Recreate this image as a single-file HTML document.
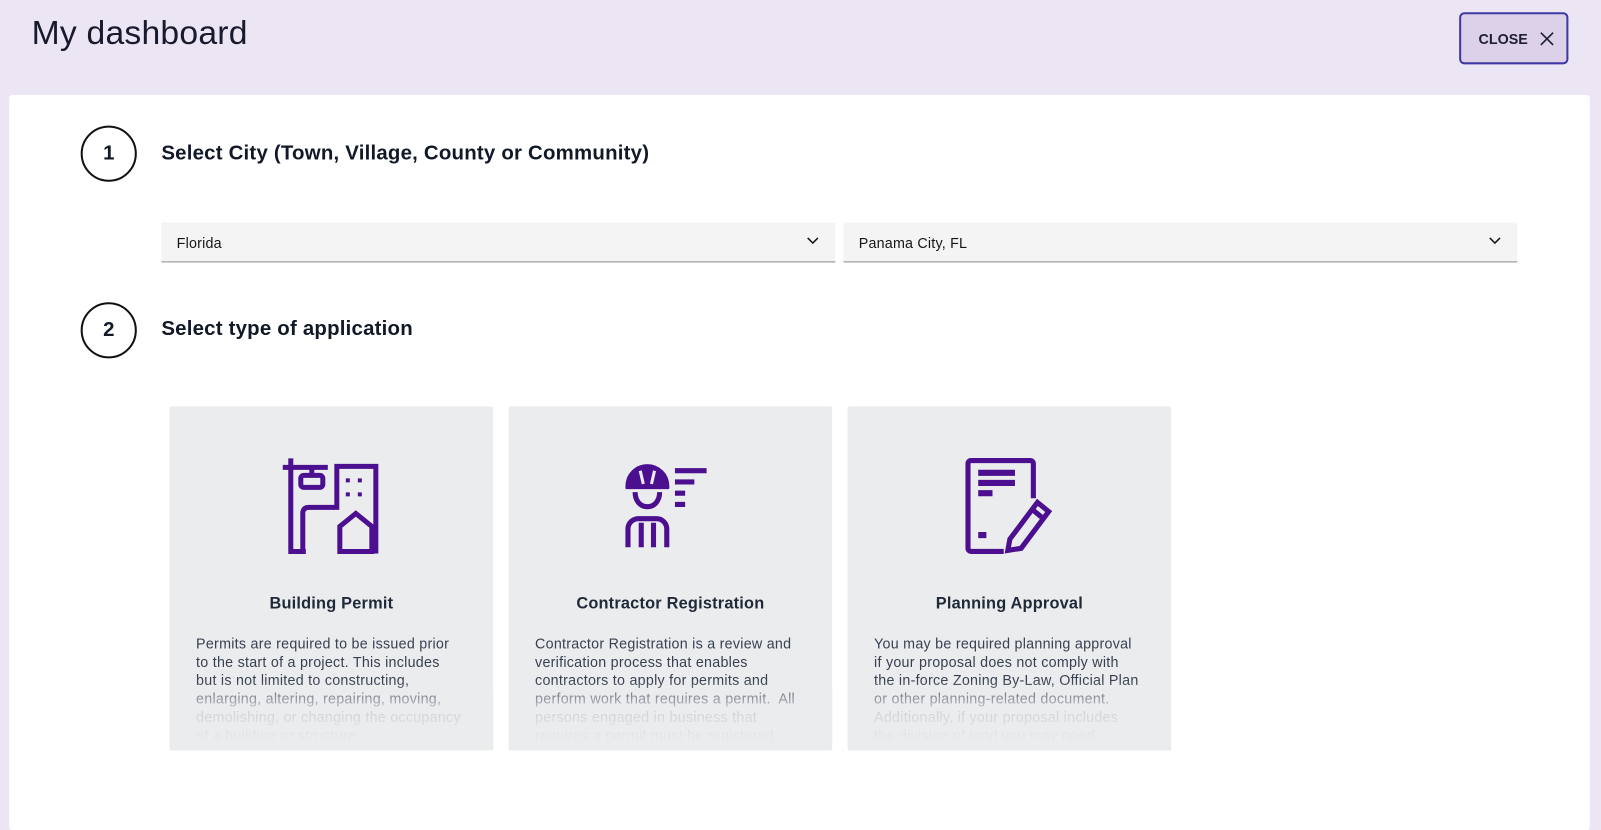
<!DOCTYPE html>
<html><head><style>
*{margin:0;padding:0;box-sizing:border-box}
body{width:1601px;height:798px;background:#ece6f4;font-family:"Liberation Sans",sans-serif;overflow:hidden;color:#111827}
#w{position:absolute;left:0;top:0;width:1568px;height:782px;transform:scale(1.0211);transform-origin:0 0}
h1{position:absolute;left:31px;top:13px;font-size:33px;font-weight:400;color:#1a1a2e;letter-spacing:.2px}
.close{position:absolute;left:1429px;top:12px;width:107px;height:51px;border:2px solid #3f3aa3;border-radius:5px;background:#ddd1ea;font-size:14px;font-weight:700;color:#1f1f33;display:flex;align-items:center;padding-left:17px}
.close svg{margin-left:12px}
.panel{position:absolute;left:9px;top:93px;width:1548px;height:720px;background:#fff;border-radius:3px}
.num{position:absolute;width:55px;height:55px;border:2px solid #111;border-radius:50%;font-size:20px;font-weight:700;display:flex;align-items:center;justify-content:center}
.st{position:absolute;font-size:20px;font-weight:700;color:#111827;letter-spacing:.2px}
.sel{position:absolute;top:218px;height:39px;background:#f4f4f4;border-bottom:1px solid #8d8d8d;font-size:14px;padding:12px 15px;color:#161616;letter-spacing:.2px}
.sel svg{position:absolute;right:16px;top:14px}
.card{position:absolute;top:398px;width:317px;height:337px;background:#ebecee;border-radius:2px;overflow:hidden}
.card svg.ic{position:absolute}
.card h3{position:absolute;top:185px;width:100%;text-align:center;font-size:16px;font-weight:700;color:#1f2937;letter-spacing:.2px}
.card p{position:absolute;top:223px;left:26px;width:260px;font-size:14px;line-height:18px;color:#374151;letter-spacing:.25px}
.card .fade{position:absolute;left:0;right:0;top:268px;height:69px;background:linear-gradient(rgba(235,236,238,0),rgba(235,236,238,.85) 45%,#ebecee 90%)}
</style></head><body><div id="w">
<h1>My dashboard</h1>
<div class="close">CLOSE<svg width="14" height="14" viewBox="0 0 14 14"><path d="M1 1l12 12M13 1L1 13" stroke="#1f1f33" stroke-width="1.6"/></svg></div>
<div class="panel"></div>
<div class="num" style="left:79px;top:123px">1</div>
<div class="st" style="left:158px;top:139px">Select City (Town, Village, County or Community)</div>
<div class="sel" style="left:158px;width:660px">Florida<svg width="12" height="8" viewBox="0 0 12 8"><path d="M1 1l5 5 5-5" fill="none" stroke="#161616" stroke-width="1.5"/></svg></div>
<div class="sel" style="left:826px;width:660px">Panama City, FL<svg width="12" height="8" viewBox="0 0 12 8"><path d="M1 1l5 5 5-5" fill="none" stroke="#161616" stroke-width="1.5"/></svg></div>
<div class="num" style="left:79px;top:296px">2</div>
<div class="st" style="left:158px;top:311px">Select type of application</div>

<div class="card" style="left:166px">
<svg class="ic" style="left:108px;top:47px" width="98" height="98" viewBox="280 455 100 100" fill="none" stroke="#4b0f8f" stroke-width="5">
<path d="M283 468H328M291 459V552H306M312 468V476"/>
<rect x="301" y="476" width="22" height="12" rx="3"/>
<path d="M303 554V514Q303 508 309 508H337V467H376V554"/>
<path d="M340 552V527L356 514L372 527V552Z"/>
<path d="M346 481h4M358 481h4M346 495h4M358 495h4" stroke-width="4"/>
</svg>
<h3>Building Permit</h3>
<p>Permits are required to be issued prior to the start of a project. This includes but is not limited to constructing, enlarging, altering, repairing, moving, demolishing, or changing the occupancy of a building or structure.</p>
<div class="fade"></div></div>

<div class="card" style="left:498px">
<svg class="ic" style="left:110px;top:50px" width="96" height="96" viewBox="0 0 96 96" fill="none" stroke="#4b0f8f" stroke-width="5">
<path d="M7 28a19 19 0 0 1 38 0z" fill="#4b0f8f"/><path d="M5 28h42" stroke-width="6"/>
<path d="M19 13l3 13M33 13l-3 13" stroke="#ebecee" stroke-width="3"/>
<path d="M14 34c0 19 24 19 24 0"/>
<path d="M7 88V70a10 10 0 0 1 10-10h18a10 10 0 0 1 10 10v18M20 64v24M32 64v24"/>
<path d="M53 13h31M53 24h19M53 35h10M53 46h10"/>
</svg>
<h3>Contractor Registration</h3>
<p>Contractor Registration is a review and verification process that enables contractors to apply for permits and perform work that requires a permit.&nbsp; All persons engaged in business that requires a permit must be registered.</p>
<div class="fade"></div></div>

<div class="card" style="left:830px">
<svg class="ic" style="left:115px;top:50px" width="96" height="96" viewBox="0 0 96 96" fill="none" stroke="#4b0f8f" stroke-width="5">
<path d="M38 92H6a3 3 0 0 1-3-3V6a3 3 0 0 1 3-3h58a3 3 0 0 1 3 3v34"/>
<path d="M13 15h36M13 25h36M13 35h14M13 76h8" stroke-width="6"/>
<path d="M42 91L44 80L71 44L82 53L55 89Z"/><path d="M66 51L77 60"/>
</svg>
<h3>Planning Approval</h3>
<p>You may be required planning approval if your proposal does not comply with the in-force Zoning By-Law, Official Plan or other planning-related document. Additionally, if your proposal includes the division of land you may need approval.</p>
<div class="fade"></div></div>
</div></body></html>
